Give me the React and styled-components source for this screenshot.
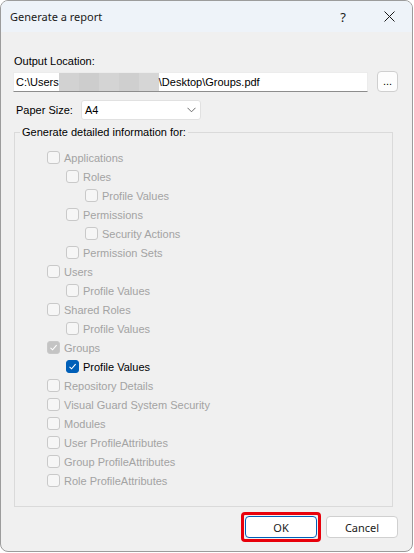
import React from 'react';
import styled, { createGlobalStyle } from 'styled-components';

const Global = createGlobalStyle`
  html, body { margin: 0; padding: 0; background: #ffffff; }
  * { box-sizing: border-box; }
`

const Window = styled.div`
  width: 413px;
  height: 552px;
  border: 1px solid #9c9c9c;
  border-radius: 8px;
  overflow: hidden;
  background: #f0f0f0;
  display: flex;
  flex-direction: column;
  font-family: "Liberation Sans", Arial, sans-serif;
  font-size: 11px;
  color: #000;
`

const TitleBar = styled.div`
  height: 31px;
  background: #eef3f9;
  display: flex;
  align-items: center;
  padding-left: 9px;
`

const Title = styled.div`
  flex: 1;
  font-family: "Noto Sans", "Open Sans", sans-serif;
  font-size: 11px;
  color: #1a1a1a;
`

const TitleBtn = styled.div`
  width: 46px;
  height: 31px;
  display: flex;
  align-items: center;
  justify-content: center;
  font-family: "Noto Sans", sans-serif;
  font-size: 13px;
  color: #1a1a1a;
`

const Body = styled.div`
  flex: 1;
  display: flex;
  flex-direction: column;
  padding: 21px 14px 0 12px;
`

const Label = styled.div`
  height: 17px;
  line-height: 17px;
  padding-left: 1px;
`

const PathRow = styled.div`
  display: flex;
  align-items: center;
  gap: 9px;
  margin-top: 1px;
`

const TextBox = styled.div`
  width: 356px;
  height: 20px;
  background: #fff;
  border: 1px solid #ececec;
  border-bottom: 1px solid #8d8d8d;
  display: flex;
  align-items: center;
  padding-left: 2px;
  font-size: 11px;
  white-space: nowrap;
`

const Blur = styled.span`
  display: inline-block;
  width: 100px;
  height: 18px;
  background: linear-gradient(90deg, #d2d2d2 0 20%, #cdcdcd 20% 40%, #d4d4d4 40% 60%, #cfcfcf 60% 80%, #d6d6d6 80% 100%);
`

const DotsBtn = styled.div`
  width: 21px;
  height: 21px;
  border: 1px solid #cfcfcf;
  border-radius: 4px;
  background: #fdfdfd;
  display: flex;
  align-items: center;
  justify-content: center;
  font-size: 11px;
  padding-bottom: 2px;
`

const PaperRow = styled.div`
  display: flex;
  align-items: center;
  margin-top: 8px;
  padding-left: 3px;
`

const PaperLabel = styled.div`
  width: 65px;
`

const Select = styled.div`
  width: 120px;
  height: 20px;
  background: #fff;
  border: 1px solid #e1e1e1;
  border-radius: 3px;
  display: flex;
  align-items: center;
  justify-content: space-between;
  padding: 0 4px 0 3px;
  font-size: 11px;
`

const GroupBox = styled.fieldset`
  display: block;
  min-width: 0;
  margin: 6px 0 0 1px;
  width: 379px;
  height: 381px;
  border: 1px solid #dadada;
  padding: 0;
`

const Legend = styled.legend`
  padding: 0 2px;
  margin-left: 5px;
  font-size: 11px;
  line-height: 13px;
`

const List = styled.div`
  display: flex;
  flex-direction: column;
  padding: 9px 0 0 32px;
`

const CheckRow = styled.div`
  height: 19px;
  display: flex;
  align-items: center;
  padding-left: ${p => p.level * 19}px;
  color: ${p => (p.active ? '#000' : '#a3a3a3')};
  font-size: 11px;
`

const Box = styled.span`
  width: 13px;
  height: 13px;
  border-radius: 3px;
  margin-right: 4px;
  flex-shrink: 0;
  display: flex;
  align-items: center;
  justify-content: center;
  border: 1px solid ${p => (p.state === 'on' ? '#005fb8' : '#c9c9c9')};
  background: ${p => (p.state === 'on' ? '#005fb8' : p.state === 'grey' ? '#c4c4c4' : '#f6f6f6')};
`

const Footer = styled.div`
  display: flex;
  justify-content: flex-end;
  align-items: flex-start;
  gap: 9px;
  padding-top: 9px;
`

const Highlight = styled.div`
  padding: 1px;
  border: 3px solid #e8000b;
  border-radius: 4px;
  margin: -4px -4px 0 0;
`

const Button = styled.div`
  width: 72px;
  height: 22px;
  background: #fff;
  border: 1px solid ${p => (p.primary ? '#005fb8' : '#d0d0d0')};
  border-radius: 4px;
  display: flex;
  align-items: center;
  justify-content: center;
  font-family: "Noto Sans", sans-serif;
  font-size: 11px;
  color: #1a1a1a;
`

const Check = () => (
  <svg width="9" height="9" viewBox="0 0 9 9">
    <path d="M1.5 4.8 L3.6 6.8 L7.6 2.2" fill="none" stroke="#fff" strokeWidth="1.1" />
  </svg>
)

const items = [
  ['Applications', 0],
  ['Roles', 1],
  ['Profile Values', 2],
  ['Permissions', 1],
  ['Security Actions', 2],
  ['Permission Sets', 1],
  ['Users', 0],
  ['Profile Values', 1],
  ['Shared Roles', 0],
  ['Profile Values', 1],
  ['Groups', 0, 'grey'],
  ['Profile Values', 1, 'on'],
  ['Repository Details', 0],
  ['Visual Guard System Security', 0],
  ['Modules', 0],
  ['User ProfileAttributes', 0],
  ['Group ProfileAttributes', 0],
  ['Role ProfileAttributes', 0],
]

export default function App() {
  return (
    <>
      <Global />
      <Window>
        <TitleBar>
          <Title>Generate a report</Title>
          <TitleBtn>?</TitleBtn>
          <TitleBtn>
            <svg width="11" height="11" viewBox="0 0 11 11">
              <path d="M0.5 0.5 L10.5 10.5 M10.5 0.5 L0.5 10.5" stroke="#1a1a1a" strokeWidth="1" />
            </svg>
          </TitleBtn>
        </TitleBar>
        <Body>
          <Label>Output Location:</Label>
          <PathRow>
            <TextBox>
              C:\Users<Blur />\Desktop\Groups.pdf
            </TextBox>
            <DotsBtn>...</DotsBtn>
          </PathRow>
          <PaperRow>
            <PaperLabel>Paper Size:</PaperLabel>
            <Select>
              A4
              <svg width="9" height="6" viewBox="0 0 9 6">
                <path d="M0.5 0.8 L4.5 4.8 L8.5 0.8" fill="none" stroke="#5a5a5a" strokeWidth="0.9" />
              </svg>
            </Select>
          </PaperRow>
          <GroupBox>
            <Legend>Generate detailed information for:</Legend>
            <List>
              {items.map(([text, level, state], i) => (
                <CheckRow key={i} level={level} active={state === 'on'}>
                  <Box state={state}>{state && <Check />}</Box>
                  {text}
                </CheckRow>
              ))}
            </List>
          </GroupBox>
          <Footer>
            <Highlight>
              <Button primary>OK</Button>
            </Highlight>
            <Button>Cancel</Button>
          </Footer>
        </Body>
      </Window>
    </>
  );
}
